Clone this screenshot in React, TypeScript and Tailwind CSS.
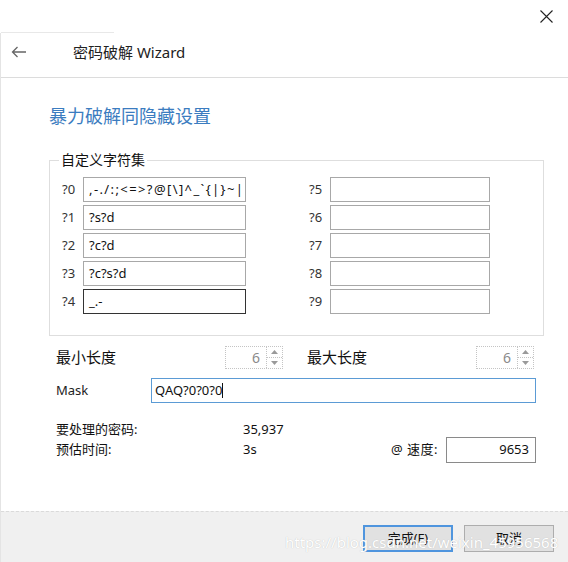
import React from 'react';

const font = { fontFamily: '"Noto Sans", "Noto Sans CJK SC", sans-serif' };

const CharInput = ({
  label,
  value,
  dark,
  wide,
  narrow,
}: {
  label: string;
  value?: string;
  dark?: boolean;
  wide?: boolean;
  narrow?: boolean;
}) => (
  <div className="flex items-center h-[25px]">
    <span className="w-[21px] text-[13px] text-[#333]">{label}</span>
    <div
      className={`h-[25px] border flex items-center px-[5px] text-[13px] text-[#111] whitespace-nowrap overflow-hidden ${
        narrow ? 'w-[160px]' : 'w-[163px]'
      } ${dark ? 'border-[#333]' : 'border-[#a8a8a8]'} ${wide ? 'tracking-[1.4px]' : ''}`}
    >
      {value}
    </div>
  </div>
);

const Spinner = ({ value }: { value: string }) => (
  <div className="w-[58px] h-[23px] border border-dotted border-[#c4c4c4] flex">
    <div className="flex-1 flex items-center justify-end pr-[6px] text-[14px] text-[#8a8a8a]">{value}</div>
    <div className="w-[16px] border-l border-dotted border-[#c4c4c4] flex flex-col">
      <div className="flex-1 flex items-center justify-center border-b border-dotted border-[#c4c4c4]">
        <svg width="7" height="4" viewBox="0 0 7 4"><path d="M0 4L3.5 0L7 4Z" fill="#9a9a9a" /></svg>
      </div>
      <div className="flex-1 flex items-center justify-center">
        <svg width="7" height="4" viewBox="0 0 7 4"><path d="M0 0L3.5 4L7 0Z" fill="#9a9a9a" /></svg>
      </div>
    </div>
  </div>
);

export default function App() {
  return (
    <div className="relative w-[568px] h-[562px] bg-white flex flex-col overflow-hidden" style={font}>
      {/* window title bar */}
      <div className="h-[33px] flex justify-end items-center pr-[15px]">
        <svg width="13" height="13" viewBox="0 0 13 13">
          <path d="M0.5 0.5L12.5 12.5M12.5 0.5L0.5 12.5" stroke="#222" strokeWidth="1.1" />
        </svg>
      </div>

      <div className="flex-1 flex flex-col border-l border-[#e4e4e4]">
        {/* wizard header */}
        <div className="relative h-[45px] flex items-center pb-[6px] border-b border-[#dcdcdc]">
          <div className="absolute -top-px left-0 w-[113px] border-t border-[#e8e8e8]" />
          <svg className="ml-[10px]" width="16" height="12" viewBox="0 0 16 12">
            <path d="M15 6H1.5M6.5 1L1.5 6L6.5 11" stroke="#666" strokeWidth="1.3" fill="none" />
          </svg>
          <span className="ml-[46px] text-[15px] text-[#222]">密码破解 Wizard</span>
        </div>

        <div className="flex-1 flex flex-col pl-[48px] pr-[32px]">
          <h1 className="mt-[26px] text-[18px] leading-[24px] text-[#3b7cc0]">暴力破解同隐藏设置</h1>

          <fieldset className="mt-[23px] w-[495px] border border-[#dedede] pb-[21px]">
            <legend className="ml-[9px] px-[2px] text-[14px] leading-[18px] text-[#111]">自定义字符集</legend>
            <div className="flex pl-[12px] pt-[8px]">
              <div className="flex flex-col gap-[3px]">
                <CharInput label="?0" value=",-./:;<=>?@[\]^_`{|}~|" wide />
                <CharInput label="?1" value="?s?d" />
                <CharInput label="?2" value="?c?d" />
                <CharInput label="?3" value="?c?s?d" />
                <CharInput label="?4" value="_.-" dark />
              </div>
              <div className="ml-[63px] flex flex-col gap-[3px]">
                <CharInput label="?5" narrow />
                <CharInput label="?6" narrow />
                <CharInput label="?7" narrow />
                <CharInput label="?8" narrow />
                <CharInput label="?9" narrow />
              </div>
            </div>
          </fieldset>

          <div className="mt-[10px] flex items-center h-[23px] pl-[7px]">
            <span className="w-[169px] text-[15px] text-[#111]">最小长度</span>
            <Spinner value="6" />
            <span className="ml-[24px] w-[169px] text-[15px] text-[#111]">最大长度</span>
            <Spinner value="6" />
          </div>

          <div className="mt-[9px] flex items-center h-[25px] pl-[7px]">
            <span className="w-[95px] text-[13px] text-[#222]">Mask</span>
            <div className="w-[385px] h-[25px] border border-[#5b9bd5] flex items-center px-[3px] text-[13px] text-[#111]">
              QAQ?0?0?0<span className="w-px h-[15px] bg-[#111]" />
            </div>
          </div>

          <div className="mt-[18px] flex flex-col pl-[7px] text-[13px] text-[#111]">
            <div className="flex items-center h-[18px]">
              <span className="w-[187px]">要处理的密码:</span>
              <span>35,937</span>
            </div>
            <div className="flex items-center h-[22px]">
              <span className="w-[187px]">预估时间:</span>
              <span className="flex-1">3s</span>
              <span className="mr-[8px] tracking-[0.5px]">@ 速度:</span>
              <div className="w-[90px] h-[26px] border border-[#8a8a8a] flex items-center justify-end pr-[6px]">9653</div>
            </div>
          </div>
        </div>

        {/* footer */}
        <div className="h-[51px] bg-[#f0f0f0] border-t border-dashed border-[#dadada] flex items-start justify-end pt-[13px] pr-[14px] gap-[11px]">
          <button className="w-[90px] h-[27px] bg-[#e1e1e1] border-2 border-[#4f95de] text-[13px] text-[#111]">完成(F)</button>
          <button className="w-[90px] h-[27px] bg-[#e1e1e1] border border-[#adadad] text-[13px] text-[#111]">取消</button>
        </div>
      </div>

      {/* watermark */}
      <div
        className="absolute left-[285px] top-[531px] text-[15px] text-white whitespace-nowrap pointer-events-none"
        style={{ textShadow: '0 0 1px #b8b8b8' }}
      >
        https://blog.csdn.net/weixin_45956568
      </div>
    </div>
  );
}
